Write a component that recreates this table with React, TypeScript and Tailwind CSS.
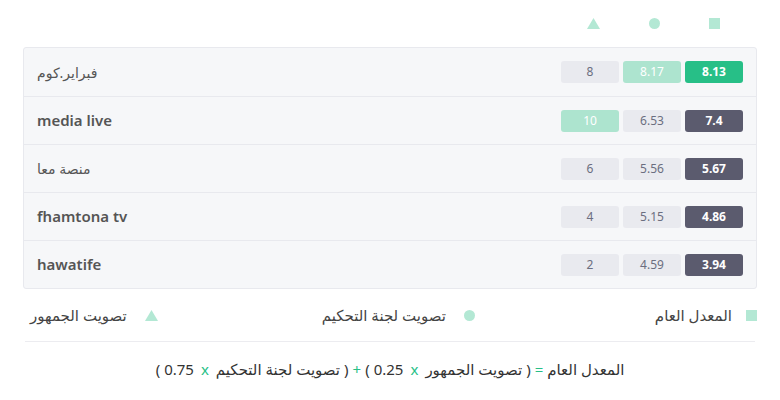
const rows = [
  { name: "فبراير.كوم", latin: false, avg: "8.13", jury: "8.17", pub: "8", top: "avg" },
  { name: "media live", latin: true, avg: "7.4", jury: "6.53", pub: "10", top: "pub" },
  { name: "منصة معا", latin: false, avg: "5.67", jury: "5.56", pub: "6", top: "" },
  { name: "fhamtona tv", latin: true, avg: "4.86", jury: "5.15", pub: "4", top: "" },
  { name: "hawatife", latin: true, avg: "3.94", jury: "4.59", pub: "2", top: "" },
];

const font = { fontFamily: '"Noto Sans", "DejaVu Sans", sans-serif' };

function Triangle() {
  return (
    <svg width={13} height={11} viewBox="0 0 13 11">
      <polygon points="6.5,0 13,11 0,11" fill="#b3e8d4" />
    </svg>
  );
}

function G({ children }: { children: React.ReactNode }) {
  return <span className="text-[#27bf87]">{children}</span>;
}

export default function App() {
  return (
    <div dir="rtl" className="w-[780px] h-[400px] bg-white text-[#4a4a4a]" style={font}>
      <div className="flex items-center h-[47px] pr-[60px] gap-[49px]">
        <div className="w-[11px] h-[11px] bg-[#b3e8d4]" />
        <div className="w-[11px] h-[11px] rounded-full bg-[#b3e8d4]" />
        <Triangle />
      </div>

      <div className="mx-[23px] rounded-[3px] border border-[#e8e9ee] bg-[#f6f7f9]">
        {rows.map((r, i) => (
          <div
            key={i}
            className={`flex items-center justify-between h-[48px] pr-[13px] pl-[13px] ${i > 0 ? "border-t border-[#e8e9ee]" : ""}`}
          >
            <div className="flex gap-[4px]">
              <div
                className={`w-[58px] h-[22px] rounded-[3px] flex items-center justify-center text-[12px] font-bold text-white ${r.top === "avg" ? "bg-[#27bf87]" : "bg-[#5b5b6e]"}`}
              >
                {r.avg}
              </div>
              <div
                className={`w-[58px] h-[22px] rounded-[3px] flex items-center justify-center text-[12px] ${r.top === "avg" ? "bg-[#ade4cf] text-white" : "bg-[#e9eaef] text-[#6b6e80]"}`}
              >
                {r.jury}
              </div>
              <div
                className={`w-[58px] h-[22px] rounded-[3px] flex items-center justify-center text-[12px] ${r.top === "pub" ? "bg-[#ade4cf] text-white" : "bg-[#e9eaef] text-[#6b6e80]"}`}
              >
                {r.pub}
              </div>
            </div>
            <div
              dir={r.latin ? "ltr" : "rtl"}
              className={r.latin ? "text-[15px] font-semibold text-[#555]" : "text-[14px] text-[#555]"}
            >
              {r.name}
            </div>
          </div>
        ))}
      </div>

      <div className="flex items-center justify-between h-[52px] pr-[23px] pl-[30px] text-[15px] text-[#444]">
        <div className="flex items-center gap-[14px]">
          <div className="w-[11px] h-[11px] bg-[#b3e8d4]" />
          <span>المعدل العام</span>
        </div>
        <div className="flex items-center gap-[18px] mr-[16px]">
          <div className="w-[11px] h-[11px] rounded-full bg-[#b3e8d4]" />
          <span>تصويت لجنة التحكيم</span>
        </div>
        <div className="flex items-center gap-[18px]">
          <Triangle />
          <span>تصويت الجمهور</span>
        </div>
      </div>

      <div className="mx-[25px] border-t border-[#ececf0]" />

      <div className="flex justify-center items-center gap-[4px] pt-[16px] text-[15px] text-[#333]">
        <span>المعدل العام</span>
        <G>=</G>
        <span>(</span>
        <span>تصويت الجمهور</span>
        <span className="px-[3px]"><G>x</G></span>
        <span>0.25</span>
        <span>)</span>
        <G>+</G>
        <span>(</span>
        <span>تصويت لجنة التحكيم</span>
        <span className="px-[3px]"><G>x</G></span>
        <span>0.75</span>
        <span>)</span>
      </div>
    </div>
  );
}
